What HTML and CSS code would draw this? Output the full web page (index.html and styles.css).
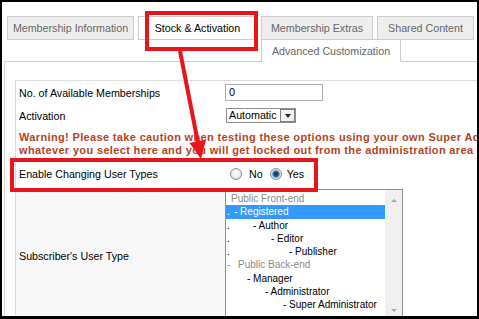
FILE: index.html
```html
<!DOCTYPE html>
<html>
<head>
<meta charset="utf-8">
<link rel="stylesheet" href="styles.css">
</head>
<body>
<div class="frame">
  <div class="tabrow first">
    <div class="tab t1">Membership Information</div>
    <div class="tab t2 active">Stock &amp; Activation</div>
    <div class="tab t3">Membership Extras</div>
    <div class="tab t4">Shared Content</div>
    <div class="tab t5">Payment Options</div>
  </div>
  <div class="tabrow second">
    <div class="tab sub">Advanced Customization</div>
  </div>
  <div class="panel">
    <div class="params">
      <div class="row r1">
        <div class="key">No. of Available Memberships</div>
        <div class="val"><div class="input">0</div></div>
      </div>
      <div class="row r2">
        <div class="key">Activation</div>
        <div class="val">
          <div class="select"><span class="sel-text">Automatic</span><span class="sel-btn"><span class="caret"></span></span></div>
        </div>
      </div>
      <div class="warn">
        <div>Warning! Please take caution when testing these options using your own Super Administrator account, as</div>
        <div>whatever you select here and you will get locked out from the administration area of your site.</div>
      </div>
      <div class="row r3">
        <div class="key">Enable Changing User Types</div>
        <div class="val radios">
          <span class="radio"></span><span class="rlabel">No</span>
          <span class="radio on"></span><span class="rlabel yes">Yes</span>
        </div>
      </div>
      <div class="row r4">
        <div class="key">Subscriber's User Type</div>
        <div class="val top">
          <div class="listbox">
            <div class="list">
              <div class="opt grp"><span class="g0">Public Front-end</span></div>
              <div class="opt sel"><span class="dot">.</span><span>- Registered</span></div>
              <div class="opt"><span class="dot">.</span><span class="l2">- Author</span></div>
              <div class="opt"><span class="dot">.</span><span class="l3">- Editor</span></div>
              <div class="opt"><span class="dot">.</span><span class="l4">- Publisher</span></div>
              <div class="opt grp"><span class="dot">-</span><span class="g1">Public Back-end</span></div>
              <div class="opt"><span class="dot"></span><span class="m1">- Manager</span></div>
              <div class="opt"><span class="dot"></span><span class="m2">- Administrator</span></div>
              <div class="opt"><span class="dot"></span><span class="m3">- Super Administrator</span></div>
            </div>
            <div class="scroll"><span class="up"></span><span class="down"></span></div>
          </div>
        </div>
      </div>
    </div>
  </div>
  <svg class="annot" width="479" height="319" viewBox="0 0 479 319">
    <rect x="147" y="13" width="109" height="36" fill="none" stroke="#e8161b" stroke-width="4"/>
    <rect x="12" y="160" width="304" height="30" fill="none" stroke="#e8161b" stroke-width="4"/>
    <line x1="180" y1="51" x2="198" y2="143" stroke="#e8161b" stroke-width="4"/>
    <polygon points="201,159 206,139.5 189.5,143" fill="#e8161b"/>
  </svg>
</div>
</body>
</html>
```
FILE: styles.css
```css
* { box-sizing: border-box; }
html, body { margin: 0; padding: 0; background: #fff; }
body { font-family: "Liberation Sans", Arial, sans-serif; font-size: 10.7px; color: #000; }

.frame {
  position: relative;
  width: 479px;
  height: 319px;
  border-style: solid;
  border-color: #000;
  border-width: 2px 2px 3px 2px;
  overflow: hidden;
  background: #fff;
}

.tabrow { display: flex; flex-wrap: nowrap; gap: 4px; padding-left: 5px; }
.tabrow.first { padding-top: 14px; }
.tabrow.second { margin-top: -1px; padding-left: 259px; position: relative; z-index: 1; margin-bottom: -1px; }

.tab {
  flex: none;
  height: 24px;
  display: flex;
  align-items: center;
  justify-content: center;
  background: #eee;
  border: 1px solid #ccc;
  color: #666;
  white-space: nowrap;
}
.t1 { width: 127px; }
.t2 { width: 119px; }
.t3 { width: 112px; }
.t4 { width: 97px; }
.t5 { width: 100px; }
.tab.active { background: #fff; color: #000; }
.tab.sub { width: 140px; height: 23px; background: #fff; border-bottom-color: #fff; }

.panel {
  margin-left: 2px;
  border-top: 1px solid #ccc;
  border-left: 1px solid #ddd;
  padding: 18px 0 0 10px;
}

.params {
  width: 620px;
  border-top: 1px solid #ddd;
  border-left: 1px solid #ddd;
}

.row { display: flex; }
.key {
  flex: none;
  width: 209px;
  padding-left: 3px;
  display: flex;
  align-items: center;
}
.val { display: flex; align-items: center; }
.val.top { align-items: flex-start; }
.r1, .r2 { height: 23px; }
.r3 { height: 28px; }
.r4 { height: 136px; }
.r4 .key { background: #f8f8f8; }

.input {
  width: 98px;
  height: 17px;
  border: 1px solid #a9aeb5;
  padding-left: 3px;
  line-height: 15px;
  background: #fff;
  font-size: 11px;
}

.select {
  margin-left: 1px;
  width: 70px;
  height: 15px;
  display: flex;
  border: 1px solid #8f8f8f;
  background: #fff;
}
.sel-text { flex: 1; padding-left: 2px; line-height: 13px; }
.sel-btn {
  width: 15px;
  border: 1px solid #7f7f7f;
  background: #f2f2f2;
  display: flex;
  align-items: center;
  justify-content: center;
}
.caret {
  width: 0; height: 0;
  border-left: 3.5px solid transparent;
  border-right: 3.5px solid transparent;
  border-top: 4px solid #222;
}

.warn {
  padding: 4px 0 3px 3px;
  line-height: 13px;
  font-size: 11px;
  letter-spacing: 0.35px;
  color: #b4441f;
  font-weight: bold;
  white-space: nowrap;
}

.radios { padding-left: 5px; }
.radio {
  width: 12px; height: 12px;
  border-radius: 50%;
  border: 1px solid #8e8f8f;
  background: radial-gradient(circle at 50% 40%, #fff 0, #ececec 55%, #cdcdcd 100%);
}
.radio.on {
  background: radial-gradient(circle at 50% 50%, #0d2c48 0, #1d4d78 1.8px, #4d86b6 3.2px, #d6e2ec 4.2px, #ededed 100%);
}
.rlabel { margin-left: 7px; margin-right: 7px; }
.rlabel.yes { margin-left: 5px; }

.listbox {
  margin-top: 1px;
  width: 178px;
  height: 134px;
  border: 1px solid #8c8f94;
  background: #fff;
  display: flex;
}
.list { flex: 1; padding-top: 2px; }
.opt {
  height: 13.25px;
  line-height: 13.25px;
  padding-left: 1px;
  white-space: nowrap;
  font-size: 10px;
  display: flex;
}
.opt.grp { color: #8a8a8a; }
.opt.sel { background: #3399ff; color: #fff; }
.dot { display: inline-block; width: 7px; flex: none; }
.g0 { margin-left: 4px; }
.g1 { margin-left: 4px; }
.l2 { margin-left: 19px; }
.l3 { margin-left: 37px; }
.l4 { margin-left: 55px; }
.m1 { margin-left: 13px; }
.m2 { margin-left: 31px; }
.m3 { margin-left: 49px; }

.scroll {
  width: 17px;
  flex: none;
  background: #f0f0f0;
  display: flex;
  flex-direction: column;
  align-items: center;
  justify-content: space-between;
  padding: 9px 0 10px;
}
.up, .down { width: 0; height: 0; border-left: 3px solid transparent; border-right: 3px solid transparent; }
.up { border-bottom: 3px solid #a8a8a8; }
.down { border-top: 3px solid #a8a8a8; }

.annot { position: absolute; left: -2px; top: -2px; pointer-events: none; }
```
